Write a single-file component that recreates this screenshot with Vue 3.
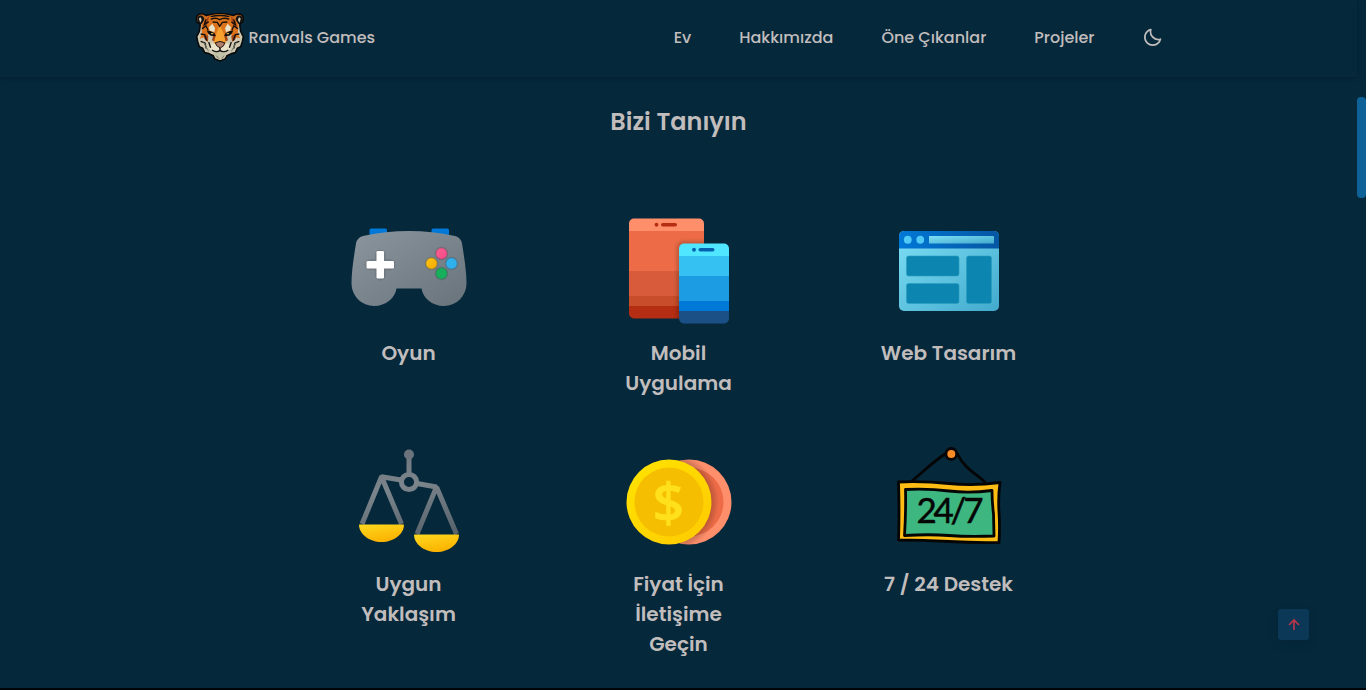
<script setup>
const links = ['Ev', 'Hakkımızda', 'Öne Çıkanlar', 'Projeler']
const services = [
  { icon: 'game', lines: ['Oyun'] },
  { icon: 'mobile', lines: ['Mobil', 'Uygulama'] },
  { icon: 'web', lines: ['Web Tasarım'] },
  { icon: 'scale', lines: ['Uygun', 'Yaklaşım'] },
  { icon: 'coins', lines: ['Fiyat İçin', 'İletişime', 'Geçin'] },
  { icon: 'support', lines: ['7 / 24 Destek'] },
]
</script>

<template>
  <div class="page">
    <header class="header">
      <nav class="nav">
        <a class="brand">
          <svg class="logo" viewBox="15 20 150 150">
            <g stroke="#090b0d" stroke-width="5" stroke-linejoin="round">
              <path fill="#c9691b" d="M21 50C14 26 31 20 48 30C75 23 104 23 131 30C149 20 166 28 157 50L149 57H31Z" />
              <path fill="#cfc9b2" d="M32 50L28 78L20 94L23 109L28 124L38 129L44 142L57 145L70 151L74 160L90 167L106 160L111 151L124 145L136 142L142 129L152 124L157 109L160 94L152 78L148 50Z" />
            </g>
            <path fill="#101214" d="M23 46Q19 29 36 31Q46 37 41 50L31 59ZM156 46Q161 29 143 31Q134 37 139 50L149 59Z" />
            <path fill="#d6cdb3" d="M28 45Q25 35 33 37L35 44L31 52ZM151 45Q154 35 146 37L144 44L148 52Z" />
            <path fill="#dd741c" d="M34 60Q45 28 89 27Q135 28 146 60L143 86L151 99L136 96L126 108L125 88L110 79L101 105H79L69 80L53 88L54 108L42 96L29 100L36 85Z" />
            <path fill="#a54512" d="M42 48L58 32L52 56L39 74ZM138 48L122 32L127 56L142 74ZM40 86L55 91L54 110L43 100ZM139 85L124 91L126 110L137 100ZM70 88L78 96L77 111L66 105ZM110 88L102 96L103 111L114 105Z" />
            <path fill="#f7a12e" d="M80 82L89 58L100 82L108 112L99 120H80L71 112Z" />
            <path fill="#e9e3ca" d="M57 66L67 55L75 69L73 80L59 76ZM123 66L113 55L105 69L108 80L121 76ZM66 112L81 119L90 131L100 119L114 112L121 130L105 142L90 137L74 142L59 130Z" />
            <path fill="none" stroke="#15100d" stroke-width="4" d="M62 34Q90 27 118 34M62 42Q78 35 89 43Q102 35 118 42M68 50L82 51L89 63L97 51L112 50M48 42L43 58L56 49M131 42L136 58L124 49M36 70L48 62L54 74M144 70L131 62L126 74M32 86L44 88L50 106M148 86L136 88L130 106M32 108L45 113L49 130M148 108L135 113L131 130M56 110L62 127M124 110L118 127" />
            <path fill="#0d0d0d" d="M50 75L60 77L73 83L78 93L62 91L54 84ZM130 75L120 77L107 83L102 93L118 91L126 84Z" />
            <path fill="#c9a94a" d="M63 83h7v4h-7zM110 83h7v4h-7z" />
            <path fill="#b07f6c" stroke="#24130f" stroke-width="3" d="M76 112Q90 105 104 112L101 121L91 128L80 121Z" />
            <path fill="none" stroke="#171614" stroke-width="4.500" d="M90 127V135M66 134Q80 144 90 135Q101 144 115 134" />
            <path fill="#c4c2a8" d="M70 144Q91 137 110 144L105 157L91 164L76 157Z" />
            <path fill="none" stroke="#77786a" stroke-width="3" d="M79 151L87 160M102 151L95 160M41 112L56 138M139 112L124 138" />
          </svg>
          <span class="brand-name">Ranvals Games</span>
        </a>
        <div class="menu">
          <a v-for="l in links" :key="l" class="link">{{ l }}</a>
          <svg class="moon" viewBox="0 0 24 24"><path fill="currentColor" d="M20.742 13.045a8.088 8.088 0 0 1-2.077.271c-2.135 0-4.14-.83-5.646-2.336a8.025 8.025 0 0 1-2.064-7.723A1 1 0 0 0 9.73 2.034a10.014 10.014 0 0 0-4.489 2.582c-3.898 3.898-3.898 10.243 0 14.143a9.937 9.937 0 0 0 7.072 2.93 9.93 9.93 0 0 0 7.07-2.929 10.007 10.007 0 0 0 2.583-4.491 1.001 1.001 0 0 0-1.224-1.224zm-2.772 4.301a7.947 7.947 0 0 1-5.656 2.343 7.953 7.953 0 0 1-5.658-2.344c-3.118-3.119-3.118-8.195 0-11.314a7.923 7.923 0 0 1 2.06-1.483 10.027 10.027 0 0 0 2.89 7.848 9.972 9.972 0 0 0 7.848 2.891 8.036 8.036 0 0 1-1.484 2.059z" /></svg>
        </div>
      </nav>
    </header>

    <main class="content">
      <h2 class="title">Bizi Tanıyın</h2>
      <div class="grid">
        <article v-for="s in services" :key="s.icon" class="card">
          <svg v-if="s.icon === 'game'" class="icon" viewBox="0 0 120 120">
            <defs>
              <linearGradient id="pad" x1="0" y1="0" x2="1" y2="1"><stop offset="0" stop-color="#8b959e" /><stop offset="1" stop-color="#68737b" /></linearGradient>
              <linearGradient id="pink" x1="0" y1="0" x2="1" y2="1"><stop offset="0" stop-color="#f8638c" /><stop offset="1" stop-color="#f8458c" /></linearGradient>
              <linearGradient id="amber" x1="0" y1="0" x2="1" y2="1"><stop offset="0" stop-color="#fcc611" /><stop offset="1" stop-color="#f9a902" /></linearGradient>
            </defs>
            <path fill="#0078d7" d="M22 17.500h14.500a1.500 1.500 0 0 1 1.500 1.500V27H20.500v-8a1.500 1.500 0 0 1 1.500-1.500zM84 17.500H98.500a1.500 1.500 0 0 1 1.500 1.500V27H82.500v-8a1.500 1.500 0 0 1 1.500-1.500z" />
            <path fill="url(#pad)" d="M2.500 72.500C2.500 60 5 45 7 32.500Q8 26.500 14 25Q60 15 106 25Q112 26.500 113 32.500C115 45 117.500 60 117.500 72.500A22.500 22.500 0 0 1 95 95C83 95 74 87 72.500 77.500H47.500C46 87 37 95 25 95A22.500 22.500 0 0 1 2.500 72.500Z" />
            <path fill="none" stroke="#000" stroke-opacity=".1" stroke-width="11" stroke-linecap="round" d="M31.300 44v20M21 53.700h20" />
            <g fill="#fff"><rect x="27.500" y="40" width="7.500" height="27.500" rx="1.300" /><rect x="17.500" y="50" width="27.500" height="7.500" rx="1.300" /></g>
            <g stroke="#4d555c" stroke-opacity=".4" stroke-width="1.600">
              <circle cx="92.500" cy="42.500" r="5.900" fill="url(#pink)" /><circle cx="82.500" cy="52.500" r="5.900" fill="url(#amber)" />
              <circle cx="102.500" cy="52.500" r="5.900" fill="#2fb1ee" /><circle cx="92.500" cy="62.500" r="5.900" fill="#16b05c" />
            </g>
          </svg>

          <svg v-else-if="s.icon === 'mobile'" class="icon" viewBox="0 0 120 120">
            <defs>
              <clipPath id="tab"><rect x="10" y="7.500" width="75" height="100" rx="5" /></clipPath>
              <clipPath id="pho"><rect x="60" y="32.500" width="50" height="80" rx="5" /></clipPath>
              <filter id="soft" x="-20%" y="-20%" width="140%" height="140%"><feGaussianBlur stdDeviation="2" /></filter>
            </defs>
            <g clip-path="url(#tab)">
              <path fill="#ff8f6b" d="M10 7h75v13H10z" /><path fill="#ed6c47" d="M10 20h75v40H10z" /><path fill="#d85c3c" d="M10 60h75v25H10z" /><path fill="#c74d2b" d="M10 85h75v10H10z" /><path fill="#b52d12" d="M10 95h75v13H10z" />
              <rect x="58" y="30.500" width="54" height="84" rx="6" fill="#000" opacity=".22" filter="url(#soft)" />
            </g>
            <circle cx="37.500" cy="13.750" r="1.900" fill="#b52d12" /><rect x="42" y="12" width="16" height="3.600" rx="1.800" fill="#b52d12" />
            <g clip-path="url(#pho)">
              <path fill="#50e6ff" d="M60 32h50v13H60z" /><path fill="#35c1f1" d="M60 45h50v20H60z" /><path fill="#1c9de3" d="M60 65h50v25H60z" /><path fill="#0078d7" d="M60 90h50v10H60z" /><path fill="#1b5086" d="M60 100h50v13H60z" />
            </g>
            <circle cx="75" cy="38.750" r="1.900" fill="#0560b0" /><rect x="79.500" y="37" width="16" height="3.600" rx="1.800" fill="#0560b0" />
          </svg>

          <svg v-else-if="s.icon === 'web'" class="icon" viewBox="0 0 120 120">
            <defs>
              <linearGradient id="win" x1="0" y1="0" x2="1" y2="1"><stop offset="0" stop-color="#7edff5" /><stop offset="1" stop-color="#42aacd" /></linearGradient>
              <linearGradient id="bar" x1="0" y1="0" x2="1" y2="0"><stop offset="0" stop-color="#0078d7" /><stop offset="1" stop-color="#0656a2" /></linearGradient>
            </defs>
            <rect x="10" y="20" width="100" height="80" rx="5" fill="url(#win)" />
            <path fill="url(#bar)" d="M15 20h90a5 5 0 0 1 5 5v12.500H10V25a5 5 0 0 1 5-5z" />
            <circle cx="18.750" cy="28.750" r="3.900" fill="#4fc9f6" /><circle cx="31.250" cy="28.750" r="3.900" fill="#4fc9f6" />
            <path fill="url(#win)" d="M40 25h63.700a1.300 1.300 0 0 1 1.300 1.300v6.200H40z" />
            <g fill="#0c86b0" stroke="#279fc0" stroke-opacity=".6" stroke-width="1"><rect x="17.500" y="45" width="52.500" height="20" rx="2" /><rect x="17.500" y="72.500" width="52.500" height="20" rx="2" /><rect x="77.500" y="45" width="25" height="47.500" rx="2" /></g>
          </svg>

          <svg v-else-if="s.icon === 'scale'" class="icon" viewBox="0 0 120 120">
            <defs>
              <linearGradient id="steel" gradientUnits="userSpaceOnUse" x1="50" y1="8" x2="70" y2="95"><stop offset="0" stop-color="#6d767d" /><stop offset=".4" stop-color="#7c858c" /><stop offset="1" stop-color="#59646d" /></linearGradient>
              <linearGradient id="gold" x1="0" y1="0" x2=".4" y2="1"><stop offset="0" stop-color="#fed920" /><stop offset="1" stop-color="#fbb300" /></linearGradient>
            </defs>
            <g fill="none" stroke="url(#steel)" stroke-width="5" stroke-linejoin="bevel">
              <path d="M60 12v20M52 38L32.500 34.800L13 82M32.500 34.800L52.500 82M68 41.500L87.500 45L68 92M87.500 45L107.500 92" />
              <circle cx="60" cy="40" r="7.600" />
            </g>
            <circle cx="60" cy="12.500" r="5" fill="#6b747c" />
            <path fill="url(#gold)" d="M10 82.500h45C55 92 45 100 32.500 100S10 92 10 82.500z" />
            <path fill="url(#gold)" d="M65 92.500h45c0 9.500-10 17.500-22.500 17.500S65 102 65 92.500z" />
          </svg>

          <svg v-else-if="s.icon === 'coins'" class="icon" viewBox="0 0 120 120">
            <defs>
              <linearGradient id="rim" x1="0" y1="0" x2="1" y2="1"><stop offset="0" stop-color="#ffe400" /><stop offset="1" stop-color="#ffc900" /></linearGradient>
              <radialGradient id="shade" gradientUnits="userSpaceOnUse" cx="50" cy="60" r="50"><stop offset=".85" stop-color="#000" stop-opacity=".2" /><stop offset="1" stop-color="#000" stop-opacity="0" /></radialGradient>
            </defs>
            <circle cx="70" cy="60" r="42.500" fill="#ff8f6b" /><circle cx="70" cy="60" r="34.500" fill="#ed6c47" />
            <circle cx="70" cy="60" r="42.500" fill="url(#shade)" />
            <circle cx="50" cy="60" r="42.500" fill="url(#rim)" /><circle cx="50" cy="60" r="34.500" fill="#f5be00" />
            <text class="dollar" x="49.500" y="79.500">$</text>
          </svg>

          <svg v-else class="icon" viewBox="0 0 120 120">
            <g stroke="#050505" stroke-width="2.800" stroke-linejoin="round" stroke-linecap="round">
              <path fill="none" d="M23 39C35 29 45 19 56 12M68.500 12C75 26 86 31 96 40" />
              <circle cx="62.300" cy="11.900" r="5.400" fill="#fa8a26" />
              <path fill="#febd14" d="M9.500 40Q35 39 60 41.500T111 40.500Q109 55 110 70T110 100.500Q85 101 60 99.500T9.500 98Q10.500 70 9.500 40Z" />
              <path fill="#3eb680" d="M16.500 47.500Q40 46.500 60 49T103 48.500Q103 60 104.500 72L105 94Q80 95 60 93.500T15.500 93.500Q17 70 16.500 47.500Z" />
            </g>
            <text class="clock" x="27.500" y="81" textLength="67" lengthAdjust="spacing">24/7</text>
          </svg>

          <h3 class="label">
            <span v-for="l in s.lines" :key="l">{{ l }}</span>
          </h3>
        </article>
      </div>
    </main>

    <a class="to-top"><svg viewBox="0 0 24 24"><path fill="currentColor" d="M11 8.414V18h2V8.414l4.293 4.293 1.414-1.414L12 4.586l-6.707 6.707 1.414 1.414z" /></svg></a>
    <div class="scroll-thumb"></div>
  </div>
</template>

<style scoped>
.page {
  position: relative;
  box-sizing: border-box;
  height: 690px;
  padding-right: 9px;
  overflow: hidden;
  background: #05283b;
  border-bottom: 2px solid #010508;
  color: #c1bdbd;
  font-family: Poppins, Inter, "Noto Sans", sans-serif;
}
.header {
  position: relative;
  height: 77px;
  box-shadow: 0 1px 4px rgba(0, 0, 0, 0.25);
}
.nav {
  display: flex;
  align-items: center;
  justify-content: space-between;
  box-sizing: border-box;
  width: 968px;
  height: 75px;
  margin: 0 auto;
}
.brand { display: flex; align-items: center; gap: 4px; }
.logo { width: 50px; height: 50px; margin-top: -2px; }
.brand-name, .link { font-size: 16px; font-weight: 500; line-height: 24px; }
.menu { display: flex; align-items: center; gap: 48px; }
.moon { width: 21px; height: 21px; margin-left: -1px; }
.content { padding-top: 27px; }
.title {
  margin: 0;
  text-align: center;
  font-size: 24px;
  font-weight: 600;
  line-height: 36px;
}
.grid {
  display: grid;
  grid-template-columns: repeat(3, 120px);
  grid-auto-rows: 187px;
  gap: 44px 150px;
  width: 660px;
  margin: 71px 0 0 349px;
}
.card { display: flex; flex-direction: column; align-items: center; }
.icon { flex: none; width: 120px; height: 120px; }
.label {
  display: flex;
  flex-direction: column;
  align-items: center;
  margin: 7px 0 0 -1px;
  font-size: 20px;
  font-weight: 600;
  line-height: 30px;
  white-space: nowrap;
}
.dollar {
  fill: #ffe01a;
  stroke: #ffe01a;
  stroke-width: 0.6px;
  font-family: "Open Sans", sans-serif;
  font-size: 55px;
  font-weight: 600;
  text-anchor: middle;
}
.clock {
  fill: #050505;
  stroke: #050505;
  stroke-width: 0.5px;
  font-family: Lato, sans-serif;
  font-size: 35px;
  font-weight: 400;
}
.to-top {
  position: absolute;
  left: 1278px;
  top: 609px;
  display: flex;
  align-items: center;
  justify-content: center;
  width: 31px;
  height: 31px;
  border-radius: 3px;
  background: #0a3856;
  color: #b93549;
  box-shadow: 0 4px 12px rgba(0, 0, 0, 0.08);
}
.to-top svg { width: 20px; height: 20px; }
.scroll-thumb {
  position: absolute;
  left: 1357px;
  top: 97px;
  width: 9px;
  height: 101px;
  border-radius: 4px;
  background: #0f6298;
}
</style>

<style>
body { background: #05283b; overflow: hidden; }
</style>
